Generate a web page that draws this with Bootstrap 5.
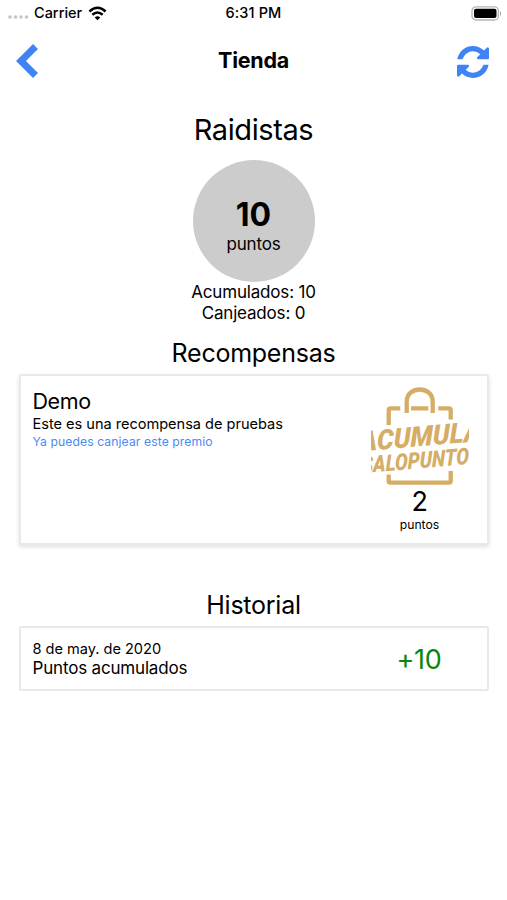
<!DOCTYPE html>
<html lang="es">
<head>
<meta charset="utf-8">
<meta name="viewport" content="width=device-width, initial-scale=1">
<title>Tienda</title>
<link rel="stylesheet" href="https://cdn.jsdelivr.net/npm/bootstrap@5.3.0/dist/css/bootstrap.min.css">
<style>
body{font-family:Inter,"Liberation Sans",sans-serif;color:#000;background:#fff;height:900px;overflow:hidden}
svg{display:block}
.status-bar{height:26px;font-size:14.5px;font-weight:500;line-height:26px}
.clock{letter-spacing:.12px}
.side{width:120px}
.wifi{margin-left:6px}
.app-header{height:72px;padding:0 18px 2px 16px}
.app-title{font-size:21.5px;font-weight:700;line-height:28px;letter-spacing:-.25px;padding-bottom:3px}
.sync{margin-top:2px}
.shop-name{font-size:29px;line-height:36px;margin-top:14px;letter-spacing:-.4px}
.score{width:122px;height:122px;background:#ccc;margin-top:12px;padding-top:35px}
.score-num{font-size:32px;font-weight:700;line-height:39px}
.body-text{font-size:17px;line-height:21px;letter-spacing:-.18px}
.section-title{font-size:25px;line-height:32px;letter-spacing:-.25px}
.rec{margin-top:13px;margin-bottom:5px}
.his{margin-top:44px;margin-bottom:5px}
.panel{width:470px;border:2px solid #e9e9e9;border-radius:2px;background:#fff}
.reward{height:171px;box-shadow:0 2px 4px rgba(0,0,0,.13);padding:11px 18px 0 12px}
.reward-name{font-size:21.5px;line-height:27px;letter-spacing:-.4px;padding-top:1px}
.t15{font-size:14.6px;line-height:18px;letter-spacing:-.03px}
.t12{font-size:12.2px;line-height:16px}
.link-blue{color:#4a8af4;letter-spacing:.08px;padding-top:1px}
.big-num{font-size:27px;line-height:30px;letter-spacing:-.3px}
.history-row{height:65px;padding:2px 45px 0 12px}
.plus{color:#0b860b}
.logo-text{font-family:Roboto,sans-serif;font-weight:900;font-style:italic;fill:#d5ad65}
</style>
</head>
<body>
<div class="status-bar d-flex justify-content-between">
  <div class="side d-flex align-items-center ps-2">
    <svg width="22" height="8" viewBox="0 0 22 8" fill="#c4c4c4" class="mt-2"><circle cx="2" cy="4" r="1.800"/><circle cx="7.500" cy="4" r="1.800"/><circle cx="13" cy="4" r="1.800"/><circle cx="18.500" cy="4" r="1.800"/></svg>
    <span class="ms-1">Carrier</span>
    <svg width="19" height="15" viewBox="0 0 19 15" class="wifi" fill="none" stroke="#000" stroke-width="2.5"><path d="M1.4 5.5Q9.5-2 17.6 5.5M4.3 8.8Q9.5 4.2 14.7 8.8"/><path d="M9.5 14.3 6.7 11.4Q9.5 9 12.3 11.4Z" fill="#000" stroke="none"/></svg>
  </div>
  <div class="clock">6:31 PM</div>
  <div class="side d-flex justify-content-end align-items-center pe-1">
    <svg width="32" height="15" viewBox="0 0 32 15"><rect x="1" y=".8" width="26.400" height="13.200" rx="4" fill="#fff" stroke="#b5b5b5" stroke-width="1.300"/><rect x="3" y="2.700" width="22.500" height="9.400" rx="2" fill="#000"/><path d="M29 5v5q2-2.500 0-5Z" fill="#999"/></svg>
  </div>
</div>
<header class="app-header d-flex justify-content-between align-items-center">
  <svg width="34" height="36" viewBox="0 0 34 36"><path d="M19.500 3.500 5 18 19.500 32.500" fill="none" stroke="#3f83f5" stroke-width="7"/></svg>
  <div class="app-title">Tienda</div>
  <svg width="32" height="32" viewBox="0 0 1536 1536" fill="#3f83f5" class="sync"><path d="M1511 928q0 5-1 7-64 268-268 434.500T764 1536q-146 0-282.500-55T238 1324l-129 129q-19 19-45 19t-45-19-19-45V960q0-26 19-45t45-19h448q26 0 45 19t19 45-19 45l-137 137q71 66 161 102t187 36q134 0 250-65t186-179q11-17 53-117 8-23 30-23h192q13 0 22.500 9.500t9.500 22.500zm25-800v448q0 26-19 45t-45 19h-448q-26 0-45-19t-19-45 19-45l138-138Q969 256 768 256q-134 0-250 65T332 500q-11 17-53 117-8 23-30 23H50q-13 0-22.500-9.500T18 608v-7q65-268 270-434.500T768 0q146 0 284 55.500T1297 212l130-129q19-19 45-19t45 19 19 45z"/></svg>
</header>
<main class="d-flex flex-column align-items-center">
  <div class="shop-name">Raidistas</div>
  <div class="score rounded-circle text-center">
    <div class="score-num">10</div>
    <div class="body-text">puntos</div>
  </div>
  <div class="body-text">Acumulados: 10</div>
  <div class="body-text">Canjeados: 0</div>
  <div class="section-title rec">Recompensas</div>
  <section class="panel reward d-flex justify-content-between">
    <div>
      <div class="reward-name">Demo</div>
      <div class="t15">Este es una recompensa de pruebas</div>
      <div class="t12 link-blue">Ya puedes canjear este premio</div>
    </div>
    <div class="text-center">
      <svg width="98" height="100" viewBox="0 0 98 100">
        <g fill="none" stroke="#d5ad65" stroke-width="4.300">
          <path d="M17.700 38V23Q17.700 21.300 19.400 21.300H29.300M40 21.300H57.300M67.300 21.300H78Q79.700 21.300 79.700 23V32.500"/>
          <path d="M35.700 26V14.500C35.700-1.500 61.700-1.500 61.700 14.500V26"/>
          <path d="M17.700 87.500V94Q17.700 95.700 19.400 95.700H78Q79.700 95.700 79.700 94V84"/>
        </g>
        <g transform="skewY(-5)">
          <text class="logo-text" x="-11" y="63.500" font-size="28" textLength="121" lengthAdjust="spacingAndGlyphs">ACUMULA</text>
          <text class="logo-text" x="-9.500" y="85.500" font-size="23" textLength="119" lengthAdjust="spacingAndGlyphs">SALOPUNTOS</text>
        </g>
      </svg>
      <div class="big-num">2</div>
      <div class="t12">puntos</div>
    </div>
  </section>
  <div class="section-title his">Historial</div>
  <section class="panel history-row d-flex justify-content-between align-items-center">
    <div>
      <div class="t15">8 de may. de 2020</div>
      <div class="body-text">Puntos acumulados</div>
    </div>
    <div class="big-num plus">+10</div>
  </section>
</main>
<script src="https://cdn.jsdelivr.net/npm/bootstrap@5.3.0/dist/js/bootstrap.bundle.min.js"></script>
</body>
</html>
